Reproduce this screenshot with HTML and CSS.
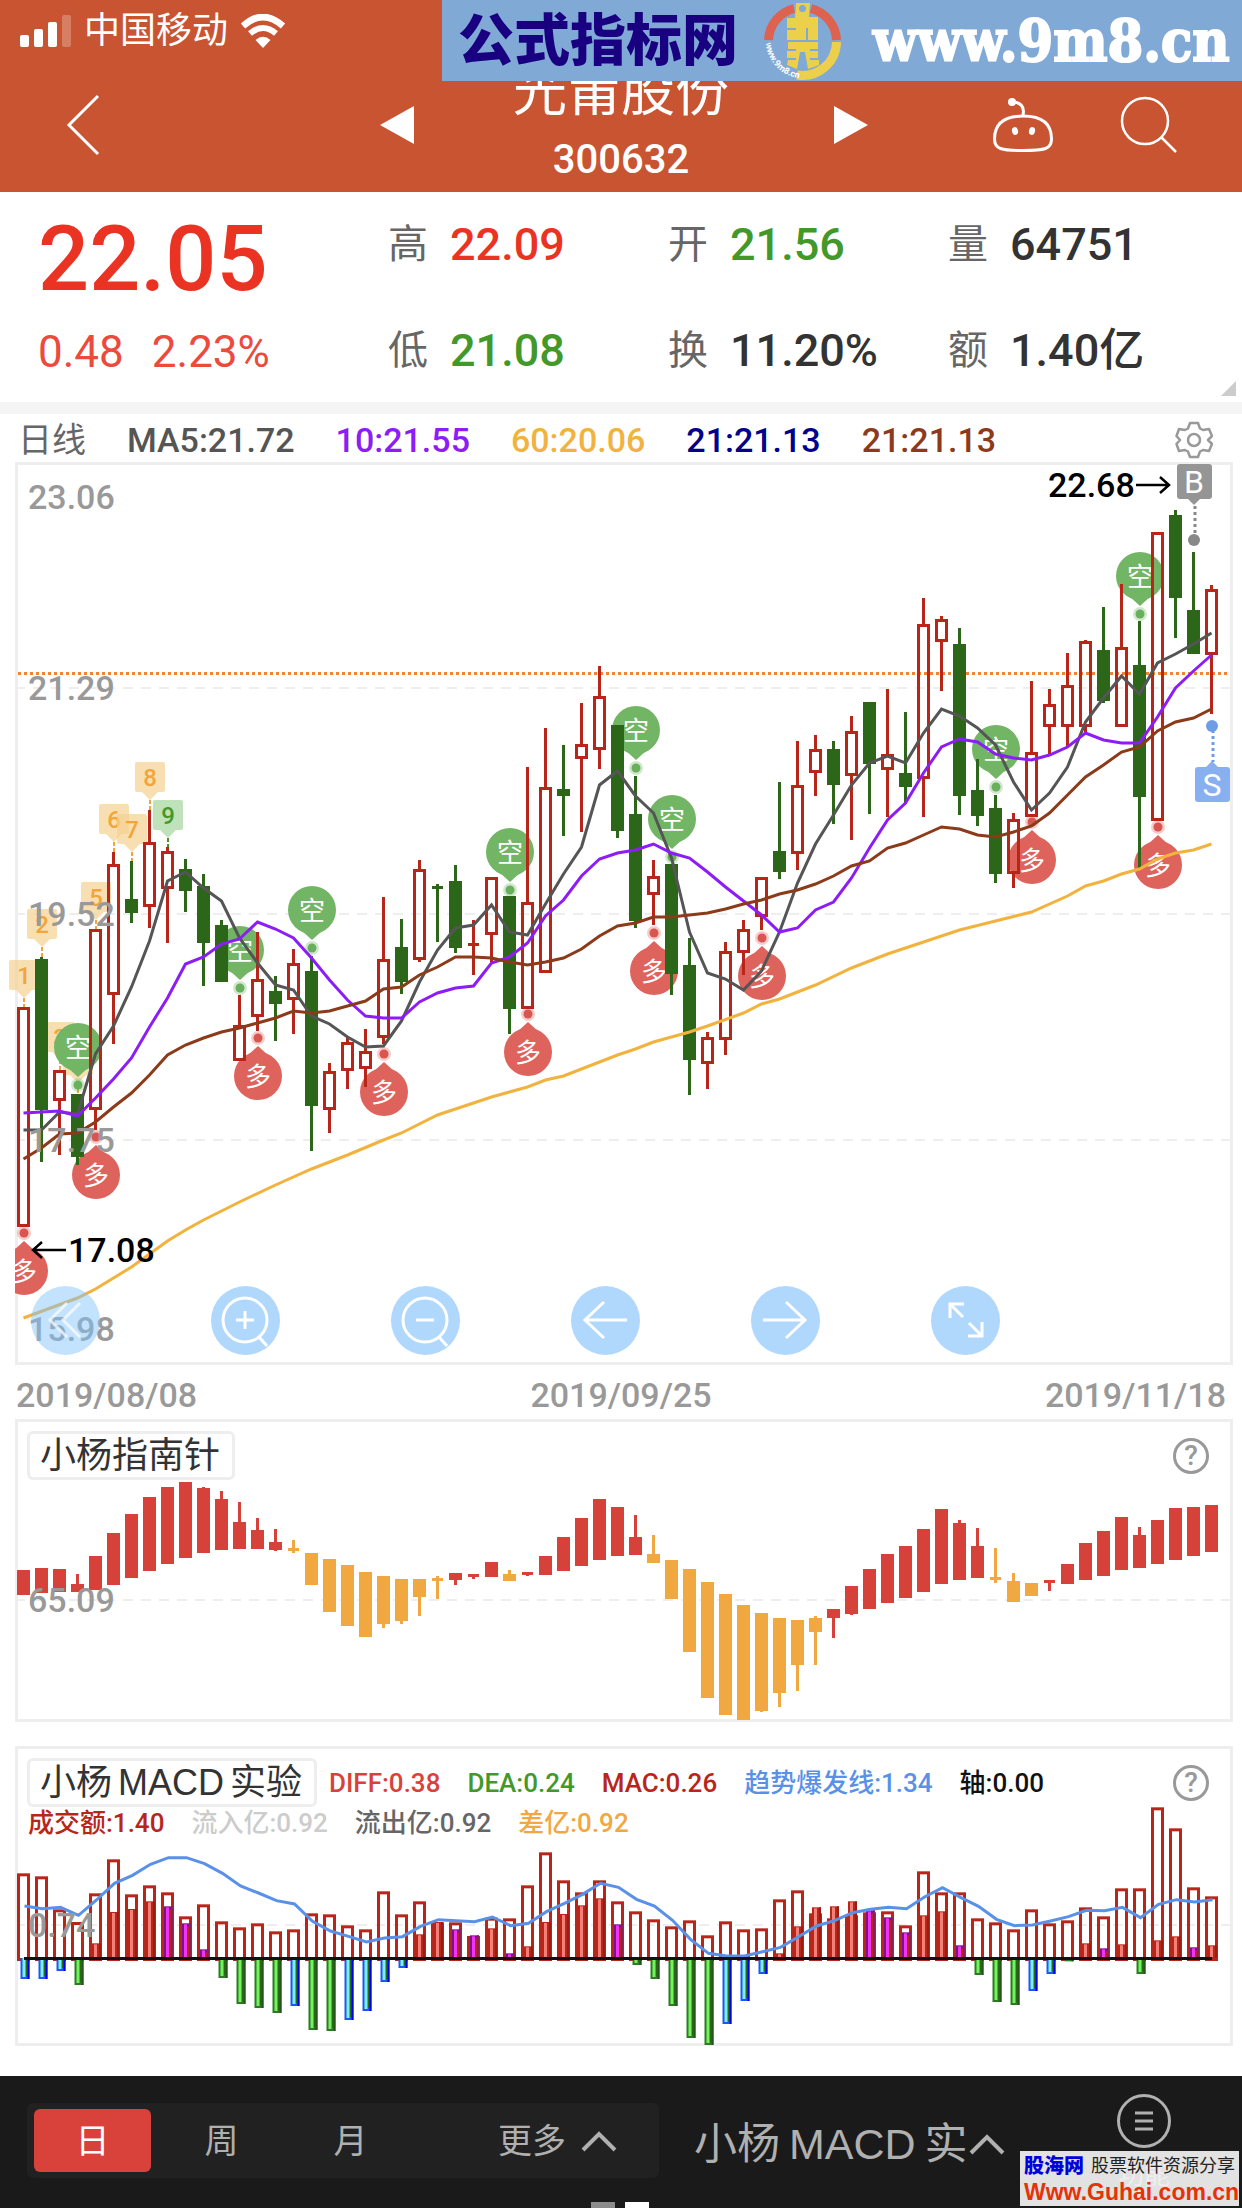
FILE: index.html
```html
<!DOCTYPE html>
<html lang="zh-CN">
<head>
<meta charset="utf-8">
<title>光莆股份 300632</title>
<meta name="viewport" content="width=device-width, initial-scale=1">
<link rel="stylesheet" href="styles.css">
</head>
<body>
<header class="header">
  <div class="status">
    <svg width="52" height="34" viewBox="0 0 52 34" fill="#fff"><rect x="0" y="21" width="9" height="12" rx="2"/><rect x="14" y="15" width="9" height="18" rx="2"/><rect x="28" y="8" width="9" height="25" rx="2"/><rect x="42" y="1" width="9" height="32" rx="2" opacity=".25"/></svg>
    <span class="carrier">中国移动</span>
    <svg width="46" height="34" viewBox="0 0 46 34"><path d="M3 12Q23-6 43 12" fill="none" stroke="#fff" stroke-width="6.500"/><path d="M10 19.500Q23 8.500 36 19.500" fill="none" stroke="#fff" stroke-width="6"/><path d="M15.500 26Q23 19.500 30.500 26L23 34Z" fill="#fff"/></svg>
  </div>
  <nav class="titlebar">
    <button class="icon-btn back" aria-label="返回"><svg width="34" height="62" viewBox="0 0 34 62"><path d="M32 2 3 31 32 60" fill="none" stroke="#fff" stroke-width="3"/></svg></button>
    <button class="icon-btn prev" aria-label="上一只"><svg width="34" height="38" viewBox="0 0 34 38"><path d="M34 0V38L0 19Z" fill="#fff"/></svg></button>
    <h1 class="stock"><span class="stock-name">光莆股份</span><span class="stock-code">300632</span></h1>
    <button class="icon-btn next" aria-label="下一只"><svg width="34" height="38" viewBox="0 0 34 38"><path d="M0 0V38L34 19Z" fill="#fff"/></svg></button>
    <button class="icon-btn robot" aria-label="助手"><svg width="62" height="56" viewBox="0 0 62 56" fill="none" stroke="#fff" stroke-width="3"><path d="M31 19C53 19 59.500 29 59.500 42C59.500 52 53 53.500 31 53.500S2.500 52 2.500 42C2.500 29 9 19 31 19Z"/><path d="M31 18C33 9 28 5 20 5"/><circle cx="20" cy="5" r="4" fill="#fff" stroke="none"/><ellipse cx="23" cy="34" rx="3" ry="4" fill="#fff" stroke="none" transform="rotate(-15 23 34)"/><ellipse cx="40" cy="34" rx="3" ry="4" fill="#fff" stroke="none" transform="rotate(15 40 34)"/></svg></button>
    <button class="icon-btn search" aria-label="搜索"><svg width="58" height="58" viewBox="0 0 58 58" fill="none" stroke="#fff" stroke-width="2.500"><circle cx="25" cy="25" r="23"/><path d="M41 41 56 56"/></svg></button>
  </nav>
  <div class="banner">
    <span class="banner-name">公式指标网</span>
    <svg class="banner-logo" width="80" height="80" viewBox="0 0 80 80">
      <path d="M4.500 39A34 34 0 0 1 30 7.500M47 7.500A34 34 0 0 1 72.500 39" fill="none" stroke="#dd6250" stroke-width="9"/>
      <path d="M72.500 41A34 34 0 0 1 33 74" fill="none" stroke="#ecd04c" stroke-width="9"/>
      <path fill="#ecd04c" fill-rule="evenodd" d="M32 2H46L45 16H54V39H44V27H42V39H23V29H32V27H23V17H31ZM38.500 4A3.500 3.500 0 1 0 38.500 11A3.500 3.500 0 1 0 38.500 4Z"/>
      <path fill="#ecd04c" d="M24 41H54V48H46V50H54V57H46V59H55V64L44 68L41 51H36L33 68L23 64L24 59H32V57H23V50H32V48H24Z"/>
      <path id="ring" d="M2 42A38 38 0 0 0 34 77" fill="none"/><text class="ring-text"><textPath href="#ring">www.9m8.cn</textPath></text>
    </svg>
    <a class="banner-url" href="#">www.9m8.cn</a>
  </div>
</header>

<main>
<section class="quote">
  <div class="price-col"><strong class="price">22.05</strong><span class="change"><span>0.48</span><span>2.23%</span></span></div>
  <dl class="stats">
    <div><dt>高</dt><dd class="up">22.09</dd></div>
    <div><dt>开</dt><dd class="down">21.56</dd></div>
    <div><dt>量</dt><dd>64751</dd></div>
    <div><dt>低</dt><dd class="down">21.08</dd></div>
    <div><dt>换</dt><dd>11.20%</dd></div>
    <div><dt>额</dt><dd>1.40亿</dd></div>
  </dl>
  <i class="corner"></i>
</section>

<section class="ma-row">
  <span class="c-day">日线</span><span class="c-ma5">MA5:21.72</span><span class="c-ma10">10:21.55</span><span class="c-ma60">60:20.06</span><span class="c-navy">21:21.13</span><span class="c-brown">21:21.13</span>
  <button class="icon-btn gear" aria-label="设置"><svg width="38" height="38" viewBox="0 0 38 38" fill="none" stroke="#999" stroke-width="2.500" stroke-linejoin="round"><path d="M15 2H23L25 7.500 28 9 34 8 37 15 33 19 37 23 34 30 28 29 25 30.500 23 36H15L13 30.500 10 29 4 30 1.500 23 5 19 1.500 15 4 8 10 9 13 7.500Z"/><circle cx="19" cy="19" r="6"/></svg></button>
</section>

<section class="panel">
  <svg class="plot" id="kline" viewBox="0 462 1242 903"></svg>
  <div class="tools">
    <button class="tool faded" aria-label="收起"><svg width="69" height="69" viewBox="0 0 69 69"><path d="M36 17 19 34 36 51M49 17 32 34 49 51"/></svg></button>
    <button class="tool" aria-label="放大"><svg width="69" height="69" viewBox="0 0 69 69"><circle cx="34" cy="34" r="22"/><path d="M34 25V43M25 34H43M48 51 56 60"/></svg></button>
    <button class="tool" aria-label="缩小"><svg width="69" height="69" viewBox="0 0 69 69"><circle cx="34" cy="34" r="22"/><path d="M25 34H43M48 51 56 60"/></svg></button>
    <button class="tool" aria-label="左移"><svg width="69" height="69" viewBox="0 0 69 69"><path d="M33 16 14 34 33 52M14 34H56"/></svg></button>
    <button class="tool" aria-label="右移"><svg width="69" height="69" viewBox="0 0 69 69"><path d="M35 16 54 34 35 52M12 34H54"/></svg></button>
    <button class="tool" aria-label="全屏"><svg width="69" height="69" viewBox="0 0 69 69"><path d="M19 32V18H33M20 19 32 31M37 50H51V36M38 37 50 49"/></svg></button>
  </div>
</section>
<div class="dates"><time>2019/08/08</time><time>2019/09/25</time><time>2019/11/18</time></div>

<section class="panel compass">
  <svg class="plot" id="compass" viewBox="0 1419 1242 303"></svg>
  <div class="legend">
    <button class="ind-name">小杨指南针</button>
    <button class="help" aria-label="帮助">?</button>
  </div>
</section>

<section class="panel macd">
  <svg class="plot" id="macd" viewBox="0 1746 1242 300"></svg>
  <div class="legend">
    <button class="ind-name">小杨<span class="latin">MACD</span>实验</button>
    <div class="vals"><span class="v-red">DIFF:0.38</span><span class="v-green">DEA:0.24</span><span class="v-dark">MAC:0.26</span><span class="v-blue">趋势爆发线:1.34</span><span class="v-black">轴:0.00</span></div>
    <button class="help" aria-label="帮助">?</button>
  </div>
  <div class="vals second"><span class="v-dark">成交额:1.40</span><span class="v-light">流入亿:0.92</span><span class="v-gray">流出亿:0.92</span><span class="v-orange">差亿:0.92</span></div>
</section>
</main>

<footer class="footer">
  <div class="periods">
    <button class="period active">日</button><button class="period">周</button><button class="period">月</button>
    <button class="period more">更多 <svg width="38" height="22" viewBox="0 0 38 22"><path d="M3 20 19 4 35 20"/></svg></button>
  </div>
  <button class="indicator">小杨<span class="latin">MACD</span>实<svg width="38" height="22" viewBox="0 0 38 22"><path d="M3 20 19 4 35 20"/></svg></button>
  <button class="menu"><svg width="56" height="56" viewBox="0 0 56 56"><circle cx="28" cy="28" r="25.500"/><path d="M19 20H37M19 28H37M19 36H37"/></svg><span>功能</span></button>
  <div class="pager"><i></i><i class="on"></i></div>
  <div class="stamp">
    <span class="stamp-top"><b>股海网</b><span>股票软件资源分享</span></span>
    <a href="#">Www.Guhai.com.cn</a>
  </div>
</footer>
<script src="charts.js"></script>
</body>
</html>
```
FILE: styles.css
```css
* { box-sizing: border-box; }
body { margin: 0; background: #fff; font-family: Roboto, "Noto Sans CJK SC", sans-serif; color: #333; }
button { margin: 0; padding: 0; border: 0; background: none; font: inherit; color: inherit; }
svg { display: block; }
h1, dl, dd { margin: 0; }

.header { position: relative; height: 192px; background: #c95432; color: #fff; }
.status { display: flex; align-items: center; gap: 12px; height: 58px; padding: 4px 0 0 20px; }
.carrier { font-size: 36px; line-height: 40px; }
.titlebar { display: grid; grid-template-columns: 380px 34px 1fr 34px 124px 62px 66px 58px 64px; align-items: center; height: 134px; }
.icon-btn { display: block; line-height: 0; }
.back { padding-left: 66px; }
.robot { grid-column: 6; }
.search { grid-column: 8; }
.stock { display: flex; flex-direction: column; align-items: center; padding-right: 6px; font-weight: 400; }
.stock-name { font-size: 54px; line-height: 70px; }
.stock-code { font-size: 40px; line-height: 64px; font-weight: 500; }
.banner { position: absolute; top: 0; right: 0; display: flex; align-items: center; width: 800px; height: 81px; padding-left: 16px; background: #80a9d6; }
.banner-name { font-size: 56px; line-height: 76px; font-weight: 900; color: #190080; }
.banner-logo { margin-left: 26px; }
.ring-text { font-size: 9px; font-weight: 700; fill: #fff; }
.banner-url { margin-left: 29px; font: bold 57px/66px "DejaVu Serif Condensed", "DejaVu Serif", serif; color: #fff; text-decoration: none; -webkit-text-stroke: 2px #fff; }

.quote { position: relative; display: flex; height: 210px; }
.price-col { display: flex; flex-direction: column; width: 388px; padding: 16px 0 0 38px; }
.price { font-size: 90px; line-height: 104px; font-weight: 500; color: #eb3323; }
.change { display: flex; gap: 28px; font-size: 44px; line-height: 80px; color: #ec4a3d; }
.stats { display: grid; grid-template-columns: 280px 280px 1fr; grid-template-rows: 106px 106px; flex: 1; }
.stats div { display: flex; align-items: center; gap: 22px; }
.stats dt { font-size: 40px; line-height: 60px; color: #666; }
.stats dd { font-size: 45px; line-height: 60px; font-weight: 500; }
.stats .up { color: #eb3323; }
.stats .down { color: #43982a; }
.corner { position: absolute; right: 6px; bottom: 6px; border: solid transparent; border-width: 15px 0 0 15px; border-bottom: 15px solid #ccc; border-top: 0; }

.ma-row { display: flex; align-items: center; gap: 41px; height: 60px; padding: 4px 29px 0 18px; border-top: 12px solid #f4f4f4; font-size: 34px; line-height: 44px; font-weight: 500; white-space: nowrap; }
.gear { margin-left: auto; }
.c-day { color: #666; font-weight: 400; }
.c-ma5 { color: #555; }
.c-ma10 { color: #8d1df7; }
.c-ma60 { color: #f0b342; }
.c-navy { color: #00008b; }
.c-brown { color: #8b3a1a; }

.panel { position: relative; }
.plot { width: 100%; height: auto; overflow: hidden; }
.plot text { font-family: Roboto, "Noto Sans CJK SC", sans-serif; }
.axis { font-size: 34px; font-weight: 500; fill: #999; }
.extreme { font-size: 34px; font-weight: 500; fill: #000; }
.pin-text { font-size: 26px; fill: #fff; text-anchor: middle; }
.flag-text { font-size: 24px; font-weight: 500; text-anchor: middle; }
.bs { font-size: 32px; fill: #fff; text-anchor: middle; }
.tools { position: absolute; left: 31px; bottom: 10px; display: flex; gap: 111px; }
.tool { width: 69px; height: 69px; border-radius: 50%; background: #b0d8fd; }
.tool svg { fill: none; stroke: #fff; stroke-width: 3; }
.tool.faded { background: rgba(128, 194, 250, .48); }
.tool.faded svg { opacity: .7; }
.dates { display: flex; justify-content: space-between; padding: 0 16px; height: 54px; font-size: 34px; line-height: 60px; font-weight: 500; color: #999; }

.macd { margin-top: 24px; }
.legend { position: absolute; top: 12px; left: 27px; right: 33px; display: flex; align-items: center; }
.ind-name { height: 49px; padding: 0 12px 0 10px; border: 3px solid #eee; border-radius: 6px; background: #fff; font: 36px/42px "Liberation Sans", "Noto Sans CJK SC", sans-serif; color: #333; white-space: nowrap; }
.latin { margin: 0 6px; }
.help { width: 36px; height: 36px; margin-left: auto; border: 3px solid #999; border-radius: 50%; font-size: 28px; line-height: 30px; font-weight: 500; color: #999; }
.vals { display: flex; gap: 27px; margin-left: 12px; font-size: 26px; line-height: 34px; font-weight: 500; white-space: nowrap; }
.vals.second { position: absolute; top: 60px; left: 16px; }
.v-red { color: #d8423a; }
.v-green { color: #43982a; }
.v-dark { color: #b8261a; }
.v-blue { color: #5a91e8; }
.v-black { color: #111; }
.v-light { color: #ccc; }
.v-gray { color: #666; }
.v-orange { color: #f2a742; }

.footer { position: relative; display: flex; align-items: flex-start; height: 132px; margin-top: 30px; padding-left: 27px; background: #1a1a1a; color: #b0b0b0; }
.periods { display: flex; align-items: center; width: 632px; height: 75px; margin-top: 27px; padding: 0 7px; border-radius: 6px; background: #212121; }
.period { width: 117px; height: 63px; margin-right: 12px; border-radius: 6px; font-size: 34px; line-height: 60px; }
.period.active { background: #d8423a; color: #fff; }
.period.more { display: flex; align-items: center; gap: 14px; width: auto; margin: 0 0 0 auto; padding-right: 34px; }
.footer svg { fill: none; stroke: #b0b0b0; stroke-width: 3; }
.period.more svg, .indicator svg { stroke-width: 4; }
.indicator { display: flex; align-items: center; margin: 38px 0 0 35px; font: 43px/60px "Liberation Sans", "Noto Sans CJK SC", sans-serif; white-space: nowrap; }
.indicator .latin { margin: 0 9px; }
.menu { display: flex; flex-direction: column; align-items: center; width: 60px; margin: 17px 68px 0 auto; font-size: 26px; line-height: 52px; }
.pager { position: absolute; left: 0; right: 2px; bottom: 0; display: flex; justify-content: center; gap: 10px; }
.pager i { width: 24px; height: 6px; background: #8c8c8c; }
.pager .on { background: #fff; }
.stamp { position: absolute; right: 3px; bottom: 2px; width: 219px; height: 55px; padding: 0 4px; background: rgba(242, 242, 242, .93); }
.stamp-top { display: flex; align-items: center; justify-content: space-between; font-size: 18px; line-height: 30px; color: #222; }
.stamp-top b { font-size: 20px; font-weight: 900; color: #00d; }
.stamp a { display: block; font: bold 23px/22px "Liberation Sans", sans-serif; color: #e63208; text-decoration: none; }
```
FILE: charts.js
```js
const RED = '#b8261a', GREEN = '#2c6618';
const cx = i => 23.5 + 18 * i;
const rect = (x, y, w, h, fill, extra = '') => `<rect x="${x}" y="${y}" width="${w}" height="${h}" fill="${fill}" ${extra}/>`;
const line = (pts, color, w = 3) => `<polyline fill="none" stroke="${color}" stroke-width="${w}" points="${pts.map(p => p.join()).join(' ')}"/>`;
const series = ys => ys.map((y, i) => [cx(i), y]);
const frame = (y, h) => `<rect x="16.500" y="${y + 1.5}" width="1215" height="${h - 3}" fill="none" stroke="#eee" stroke-width="3"/>`;
const grid = y => `<path d="M15 ${y}H1232" stroke="#eee" stroke-width="2" stroke-dasharray="10 8"/>`;
const label = (x, y, t, c = 'axis') => `<text class="${c}" x="${x}" y="${y + 12}">${t}</text>`;

/* direction, high, body top, body bottom, low */
const candles = `r1007,1007,1227,1227 g957,959,1110,1162 r1070,1070,1101,1155 g1094,1094,1157,1165 r929,929,1110,1130 r852,864,995,1044 g861,899,913,923 r810,842,907,928 r847,851,889,943 g859,869,891,912
g874,886,943,986 g920,925,982,982 r995,1025,1061,1061 r932,979,1017,1031 g976,991,1004,1041 r949,963,1000,1034 g956,971,1106,1151 r1063,1071,1110,1133 r1038,1042,1071,1089 r1029,1051,1069,1087
r897,959,1038,1044 g919,947,982,994 r860,869,960,962 g884,886,889,942 g865,881,948,953 r920,943,946,975 r877,877,935,962 g896,896,1009,1034 r767,902,1009,1009 r728,787,973,973
g745,789,796,836 r703,744,759,832 r666,696,750,769 g725,725,831,838 g776,814,921,928 r860,876,895,925 g864,864,974,995 g938,965,1060,1095 r1032,1037,1064,1089 r942,951,1040,1055
r920,929,953,975 r877,877,917,930 g782,851,872,879 r741,785,854,870 r735,749,773,796 g741,749,785,824 r716,731,776,840 g702,702,764,814 r689,754,770,817 g712,773,787,804
r598,624,779,817 r616,619,642,691 g628,644,796,815 g759,790,816,826 g795,808,874,883 r813,819,874,888 r681,752,817,817 r689,704,727,754 r653,685,727,747 r640,641,727,732
g607,650,701,703 r584,647,727,727 g621,665,797,868 r532,532,821,821 g510,515,598,638 g552,610,654,654 r585,589,655,714`.split(/\s+/);

const ma5 = [1130,1130,1112,1114,1054,1026,987,941,881,872,888,901,938,963,985,990,1016,1024,1037,1047,1046,1021,982,950,928,925,905,932,935,904,874,847,785,771,796,813,858,932,973,979,990,971,932,883,844,815,785,763,756,763,733,709,716,728,745,782,810,793,767,722,698,676,694,663,654,644,633];
const ma10 = [1113,1112,1111,1116,1098,1079,1058,1027,998,964,957,944,939,922,929,938,958,980,1000,1016,1018,1018,1002,993,988,986,963,957,943,916,900,876,859,853,850,844,853,858,872,887,901,915,932,928,910,902,878,848,820,803,773,747,739,742,754,758,760,755,747,733,740,743,743,717,688,671,655];
const ma21 = [1159,1148,1134,1133,1122,1107,1093,1075,1055,1045,1038,1032,1028,1023,1018,1011,1013,1011,1006,1001,989,987,975,967,957,957,958,962,965,962,958,949,936,926,923,917,917,915,913,909,904,900,894,890,884,876,866,861,848,843,835,827,829,835,837,832,826,813,795,777,765,752,747,731,722,718,709];
const ma60 = [[0,1318],[3,1298],[4,1289],[6,1267],[8,1241],[9,1230],[10,1220],[11,1211],[12,1202],[14,1185],[16,1169],[18,1155],[20,1140],[21,1133],[23,1115],[26,1097],[28,1087],[29,1080],[30,1076],[32,1062],[33,1055],[34,1049],[35,1042],[37,1032],[38,1026],[40,1013],[41,1004],[42,999],[43,992],[44,985],[46,968],[48,954],[50,942],[52,930],[54,921],[56,912],[58,896],[59,886],[60,881],[61,874],[62,869],[63,859],[64,853],[65,850],[66,844]];

function pin(i, y, dir) {
  const x = cx(i) + .5, up = dir < 0, c = up ? '#71b565' : '#de635d', d = up ? '#68b05c' : '#da5550';
  const cy = y + dir * 38;
  return `<circle cx="${x}" cy="${y}" r="7" fill="${d}" opacity=".3"/><circle cx="${x}" cy="${y}" r="4.500" fill="${d}"/>` +
    `<circle cx="${x}" cy="${cy}" r="24" fill="${c}"/><path d="M${x - 11} ${cy - dir * 20}L${x} ${y + dir * 8}L${x + 11} ${cy - dir * 20}Z" fill="${c}"/>` +
    `<text class="pin-text" x="${x}" y="${cy + 10}">${up ? '空' : '多'}</text>`;
}
function flag(i, y, n) {
  const x = cx(i) + .5, last = n === 9, c = last ? '#a4d69e' : '#f6d292', t = last ? '#43982a' : '#f2a53a';
  return `<g><g opacity=".7"><rect x="${x - 15}" y="${y}" width="30" height="30" rx="2" fill="${c}"/><path d="M${x - 8} ${y + 30}H${x + 8}L${x} ${y + 38}Z" fill="${c}"/></g><path d="M${x} ${y + 38}V${y + 48}" stroke="${t}" stroke-width="2" stroke-dasharray="4 2"/><text class="flag-text" fill="${t}" x="${x}" y="${y + 24}">${n}</text></g>`;
}

let k = frame(462, 903) + grid(688) + grid(914) + grid(1140);
k += '<path d="M18 673.500H1230" stroke="#ee8434" stroke-width="3" stroke-dasharray="3 3"/>';
k += [960, 909, 1022, 1045, 882, 804, 814, 762, 800].map((y, i) => flag(i, y, i + 1)).join('');
k += '<clipPath id="box"><rect x="15" y="462" width="1218" height="903"/></clipPath><g clip-path="url(#box)">';
k += [[3,1085],[12,988],[16,948],[27,890],[34,768],[36,857],[54,787],[62,614]].map(p => pin(p[0], p[1], -1)).join('');
k += [[0,1233],[4,1137],[13,1038],[20,1054],[28,1014],[35,933],[41,938],[56,822],[63,827]].map(p => pin(p[0], p[1], 1)).join('') + '</g>';
candles.forEach((s, i) => {
  const [h, t, b, l] = s.slice(1).split(',').map(Number), x = cx(i), up = s[0] === 'r', c = up ? RED : GREEN;
  k += rect(x - 1.5, h, 3, t - h, c) + rect(x - 1.5, b, 3, l - b, c);
  if (b - t < 5) k += rect(x - 5.5, t, 11, b - t, c);
  else if (up) k += `<rect x="${x - 5}" y="${t + 1.5}" width="10" height="${b - t - 3}" fill="none" stroke="${c}" stroke-width="3"/>`;
  else k += rect(x - 6.5, t, 13, b - t, c);
});
k += line(series(ma5), '#555') + line(series(ma10), '#8d1df7') + line(ma60.map(p => [cx(p[0]), p[1]]), '#f2b23e') + line(series(ma21), '#8b3a1a');
k += label(28, 497, '23.06') + label(28, 688, '21.29') + label(28, 914, '19.52') + label(28, 1140, '17.75') + label(28, 1329, '15.98');
k += label(1048, 485, '22.68', 'extreme') + label(68, 1250, '17.08', 'extreme');
k += '<path d="M1136 485H1169M1160 477L1169 485L1160 493M66 1250H33M42 1242L33 1250L42 1258" fill="none" stroke="#000" stroke-width="2.500"/>';
k += rect(1177, 464, 35, 35, '#959595', 'rx="3"') + '<path d="M1188 499H1200L1194 505Z" fill="#959595"/><path d="M1195 506V534" stroke="#888" stroke-width="3" stroke-dasharray="3 3"/><circle cx="1194" cy="540" r="6" fill="#888"/><text class="bs" x="1194" y="493">B</text>';
k += rect(1195, 767, 35, 35, '#88aff0', 'rx="3"') + '<path d="M1206 767H1218L1212 761Z" fill="#88aff0"/><path d="M1213 730V762" stroke="#6d9de9" stroke-width="3" stroke-dasharray="3 3"/><circle cx="1212" cy="726" r="6" fill="#6d9de9"/><text class="bs" x="1212" y="796">S</text>';
document.getElementById('kline').innerHTML = k;

/* colour, high, top, bottom, low in thirds of a pixel below the panel's top */
const compass = `r450,450,525,525 r444,444,519,519 r447,447,516,516 r462,492,516,516 r408,408,510,510 r339,339,495,495 r282,282,474,474 r231,231,453,453 r201,201,432,432 r186,186,414,414
r201,204,399,399 r213,237,390,390 r246,306,387,387 r294,330,387,387 r327,366,390,393 o360,384,393,399 o399,399,495,495 o417,417,576,576 o435,435,618,618 o456,456,651,651
o468,468,612,624 o477,477,603,612 o477,477,531,588 o468,474,483,537 r459,459,480,495 r462,462,471,477 r426,426,471,471 o450,462,483,483 r456,456,465,468 r408,408,465,465
r351,351,453,453 r294,294,438,438 r237,237,420,420 r261,261,408,408 r285,351,405,405 o345,402,429,429 o420,420,537,537 o447,447,696,696 o486,486,834,834 o522,522,885,885
o555,555,900,900 o579,579,873,876 o594,594,819,861 o600,600,735,813 o588,594,636,735 r567,567,594,654 r498,498,582,585 r447,447,567,567 r402,402,549,549 r378,378,534,534
r327,327,516,516 r267,267,492,492 r300,309,480,480 r324,378,474,474 o384,471,480,489 o459,483,546,546 o489,489,528,528 r480,480,489,513 r432,432,492,492 r369,369,480,480
r333,333,468,468 r291,291,450,450 r321,345,444,444 r300,300,432,432 r264,264,420,420 r261,261,408,408 r255,255,396,396`.split(/\s+/);
let c2 = frame(1419, 303) + grid(1600);
compass.forEach((s, i) => {
  const [h, t, b, l] = s.slice(1).split(',').map(v => 1420 + v / 3), x = cx(i), c = s[0] === 'r' ? '#d6423a' : '#f1a841';
  const w = b - t < 4 ? 11 : 13;
  c2 += rect(x - 1.5, h, 3, l - h, c) + rect(x - w / 2, t, w, b - t, c);
});
document.getElementById('compass').innerHTML = c2 + label(28, 1600, '65.09');

const volume = [400,409,508,546,460,358,463,436,457,529,493,544,562,550,574,568,520,523,556,568,454,523,484,547,547,588,533,535,436,337,421,457,421,484,514,538,559,541,586,544,568,565,478,451,520,535,526,517,514,556,394,457,457,535,547,568,508,550,541,502,529,445,445,202,265,442,469];
const flow = `B717 B717 B693 G735 R610 R516 R507 R484 M499 M550 M628 G714 G792 G804 G819 B798 G870 G873 B840 B813 B726 B684 R583 R546 M568 M586 R565 M640 R619 R546 R522 R496 R475 M553 G675 G717 G798 G894 G915 B852 B783 B702 R640 R559 R502 R499 R484 M511 M532 M577 R526 R514 M616 G705 G786 G795 B753 B702 G664 R610 M625 R613 G702 R601 R589 M622 R616`.split(' ');
const trend = [498,506,502,526,480,430,406,373,353,353,371,400,438,459,482,492,544,573,589,606,594,590,559,539,542,545,531,557,550,515,490,463,430,442,478,498,541,598,640,648,648,635,622,590,558,542,518,508,502,506,471,443,472,499,538,557,555,543,530,511,512,502,533,493,479,486,479];
const tones = { R: ['#b8261a', '#f08078', '#9c1c12'], M: ['#7d1288', '#ee35f5', '#8a1f5c'], G: ['#2e7a24', '#72f45c', '#25551a'], B: ['#1f57f5', '#7cf3fa', '#0000f0'] };
let c3 = frame(1746, 300) + grid(1925);
volume.forEach((v, i) => {
  const x = cx(i), y = 1740 + v / 3, f = 1740 + flow[i].slice(1) / 3, [edge, light, dark] = tones[flow[i][0]], up = f < 1958;
  c3 += `<rect x="${x - 5}" y="${y + 1.5}" width="10" height="${1958 - y}" fill="none" stroke="${RED}" stroke-width="3"/>`;
  const fy = up ? f : 1958, fh = Math.abs(f - 1958), x0 = up ? x - 3.5 : x - 3, core = up ? '#b8261a' : '#2c6618';
  c3 += rect(x0, fy, 9, fh, edge) + rect(x0 + 5, fy + (up ? 3 : 0), 2, Math.max(fh - 3, 0), core) + rect(x0 + 7, fy, 2, fh, dark) + rect(x0 + 2, fy + (up ? 1 : 0), 3, Math.max(fh - 2, 0), light);
});
c3 += line(trend.map((v, i) => [cx(i) + 1, 1740 + v / 3]), '#5a91e8') + '<path d="M24 1958.500H1212" stroke="#111" stroke-width="3"/>' + label(28, 1925, '0.74');
document.getElementById('macd').innerHTML = c3;
```
